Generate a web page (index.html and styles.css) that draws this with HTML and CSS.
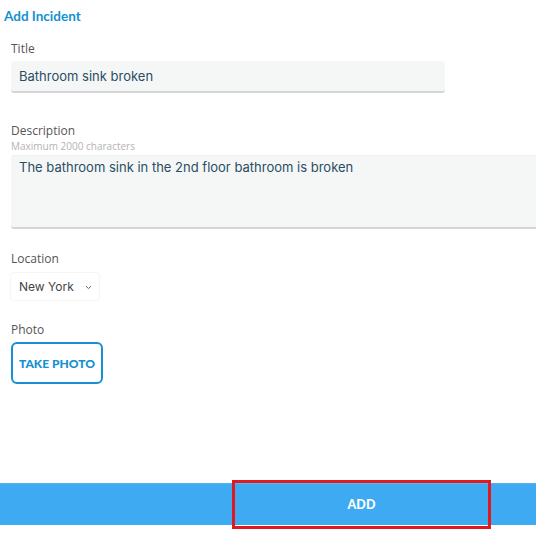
FILE: index.html
```html
<!DOCTYPE html>
<html>
<head>
<meta charset="utf-8">
<link rel="stylesheet" href="styles.css">
</head>
<body>
<div class="page">
  <h1 class="title">Add Incident</h1>
  <form class="form">
    <div class="field f-title">
      <label class="label">Title</label>
      <div class="input">Bathroom sink broken</div>
    </div>
    <div class="field f-desc">
      <label class="label">Description</label>
      <div class="hint">Maximum 2000 characters</div>
      <div class="textarea">The bathroom sink in the 2nd floor bathroom is broken</div>
    </div>
    <div class="field f-loc">
      <label class="label">Location</label>
      <div class="select"><span>New York</span>
        <svg class="chev" width="7" height="5" viewBox="0 0 7 5"><path d="M1 1.2 L3.5 3.6 L6 1.2" fill="none" stroke="#666" stroke-width="1"/></svg>
      </div>
    </div>
    <div class="field f-photo">
      <label class="label">Photo</label>
      <button type="button" class="photo-btn">TAKE PHOTO</button>
    </div>
  </form>
  <div class="footer">
    <div class="spacer"></div>
    <button type="button" class="add-btn">ADD</button>
    <div class="spacer-r"></div>
  </div>
</div>
</body>
</html>
```
FILE: styles.css
```css
html, body {
  margin: 0;
  padding: 0;
  background: #fff;
  overflow: hidden;
}
.page {
  width: 536px;
  height: 536px;
  display: flex;
  flex-direction: column;
  font-family: "Lato", "Open Sans", sans-serif;
}
.title {
  margin: 0;
  padding: 8px 0 0 4px;
  height: 16px;
  line-height: 16px;
  font-size: 13.5px;
  font-weight: 700;
  color: #1590d2;
  font-family: "Lato", sans-serif;
}
.form {
  padding-left: 11px;
  display: flex;
  flex-direction: column;
}
.field {
  display: flex;
  flex-direction: column;
  align-items: flex-start;
}
.label {
  font-size: 12px;
  line-height: 16px;
  color: #555;
  font-family: "Open Sans", sans-serif;
}
.f-title { margin-top: 17px; }
.f-title .label { margin-bottom: 4px; }
.input {
  box-sizing: border-box;
  width: 434px;
  height: 32px;
  background: #f5f7f7;
  border-radius: 3px;
  border-bottom: 2px solid #d3d6d6;
  padding-left: 8px;
  font-family: "Inter", sans-serif;
  font-size: 13px;
  line-height: 30px;
  color: #2b4d64;
}
.f-desc { margin-top: 30px; }
.hint {
  font-size: 10px;
  line-height: 14px;
  color: #b3b3b3;
  font-family: "Open Sans", sans-serif;
  margin-bottom: 2px;
}
.textarea {
  box-sizing: border-box;
  width: 540px;
  height: 74px;
  background: #f5f7f7;
  border-radius: 3px 0 0 3px;
  border-top: 1px solid #eef0f0;
  border-bottom: 2px solid #d3d6d6;
  padding: 1px 0 0 8px;
  font-family: "Inter", sans-serif;
  font-size: 13px;
  line-height: 20px;
  color: #2b4d64;
}
.f-loc { margin-top: 22px; }
.f-loc .label { margin-bottom: 6px; }
.select {
  box-sizing: border-box;
  width: 88px;
  height: 27px;
  display: flex;
  align-items: center;
  padding-left: 8px;
  border-radius: 3px;
  box-shadow: 0 0 2px rgba(0,0,0,0.14);
  font-family: "Inter", sans-serif;
  font-size: 12px;
  color: #444;
}
.chev { margin-left: 11px; margin-top: 2px; }
.f-photo { margin-top: 22px; }
.f-photo .label { margin-bottom: 4px; }
.photo-btn {
  box-sizing: border-box;
  width: 92px;
  height: 42px;
  border: 2px solid #1590d2;
  border-radius: 6px;
  background: #fff;
  color: #1590d2;
  font-family: "Lato", sans-serif;
  font-weight: 900;
  font-size: 12px;
  padding: 0;
  cursor: pointer;
}
.footer {
  margin-top: auto;
  margin-bottom: 11px;
  height: 42px;
  background: #3eaaf2;
  border-top: 1px solid #55b4f4;
  box-sizing: border-box;
  display: flex;
}
.spacer { width: 236px; }
.spacer-r { flex: 1; }
.add-btn {
  width: 251px;
  height: 100%;
  background: transparent;
  border: none;
  outline: 3px solid #e0191e;
  outline-offset: 1px;
  color: #fff;
  font-family: "Lato", sans-serif;
  font-weight: 900;
  font-size: 12.5px;
  padding: 0;
}
```
